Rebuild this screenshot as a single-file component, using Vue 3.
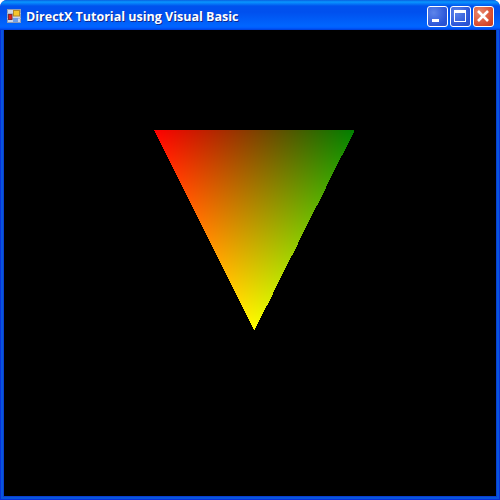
<script setup>
import { onMounted, ref } from 'vue'

const view = ref(null)

onMounted(() => {
  const ctx = view.value.getContext('2d')
  const w = view.value.width
  const h = view.value.height
  const img = ctx.createImageData(w, h)
  const left = 150
  const top = 100
  for (let y = 0; y < 200; y++) {
    const t = y / 200
    for (let x = 0; x < 200; x++) {
      const u = x / 200 - t / 2
      const a = 1 - u - t
      if (u < 0 || a <= 0) continue
      const i = ((top + y) * w + left + x) * 4
      img.data[i] = 255 * (1 - u)
      img.data[i + 1] = 128 * u + 255 * t
      img.data[i + 2] = 0
      img.data[i + 3] = 255
    }
  }
  ctx.putImageData(img, 0, 0)
})
</script>

<template>
  <div class="window">
    <div class="titlebar">
      <svg class="appicon" width="14" height="14" viewBox="0 0 14 14">
        <rect x="0.5" y="0.5" width="13" height="13" fill="#ccd6e8" stroke="#8f9db5" />
        <path d="M0 4.5 H14 M0 9.5 H14" stroke="#aab6cc" stroke-width="1" />
        <rect x="1.5" y="5.5" width="3.5" height="5" fill="#e0201a" stroke="#7d2a38" stroke-width="1" />
        <rect x="6.5" y="1.5" width="6" height="5.5" fill="#f6c62c" stroke="#b38a28" stroke-width="1" />
        <rect x="6" y="9" width="5" height="4" fill="#6f9ee8" />
      </svg>
      <span class="title">DirectX Tutorial using Visual Basic</span>
      <div class="buttons">
        <div class="btn">
          <svg width="21" height="21" viewBox="0 0 21 21"><rect x="5" y="13" width="7" height="3" fill="#fff" /></svg>
        </div>
        <div class="btn">
          <svg width="21" height="21" viewBox="0 0 21 21"><rect x="4.5" y="4.5" width="11" height="11" fill="none" stroke="#fff" stroke-width="1" /><rect x="4" y="4" width="12" height="3" fill="#fff" /></svg>
        </div>
        <div class="btn close">
          <svg width="21" height="21" viewBox="0 0 21 21"><path d="M5 5 L15 15 M15 5 L5 15" stroke="#fff" stroke-width="2.6" fill="none" /></svg>
        </div>
      </div>
    </div>
    <div class="client">
      <div class="frame">
        <div class="inner">
          <canvas ref="view" class="viewport" width="492" height="466"></canvas>
        </div>
      </div>
    </div>
  </div>
</template>

<style>
html, body { margin: 0; background: #fff; }
</style>

<style scoped>
.window {
  width: 500px;
  height: 500px;
  box-sizing: border-box;
  display: flex;
  flex-direction: column;
  background: #0831d9;
  border-radius: 7px 7px 0 0;
  overflow: hidden;
}
.titlebar {
  height: 30px;
  flex: none;
  box-sizing: border-box;
  display: flex;
  align-items: center;
  padding: 2px 6px 0 7px;
  background: linear-gradient(180deg, #0a5fe0 0, #0997ff 2px, #0053ee 6px, #0050ee 12px, #0066ff 26px, #005bff 28px, #003dd7 30px);
}
.appicon { flex: none; margin-right: 5px; }
.title {
  font-family: "Open Sans", sans-serif;
  font-weight: 700;
  font-size: 12.5px;
  color: #fff;
  text-shadow: 1px 1px 0 #0f2a90;
  white-space: nowrap;
}
.buttons { margin-left: auto; display: flex; gap: 2px; }
.btn {
  width: 21px;
  height: 21px;
  box-sizing: border-box;
  border: 1px solid #fff;
  border-radius: 3px;
  background: radial-gradient(circle at 30% 30%, #5d85ea, #2a55d8 70%, #2a4fc8);
  display: flex;
  align-items: center;
  justify-content: center;
}
.btn svg { flex: none; }
.btn.close { background: radial-gradient(circle at 30% 30%, #e88a6e, #d8492c 70%, #c23a20); }
.client {
  flex: 1;
  min-height: 0;
  display: flex;
  box-sizing: border-box;
  border: 1px solid #0831d9;
  border-top: 0;
}
.frame {
  flex: 1;
  min-width: 0;
  display: flex;
  box-sizing: border-box;
  border: 2px solid #0855dd;
  border-top: 0;
}
.inner {
  flex: 1;
  min-width: 0;
  display: flex;
  box-sizing: border-box;
  border: 1px solid #0a3fd0;
  border-top: 0;
}
.viewport { display: block; background: #000; }
</style>
